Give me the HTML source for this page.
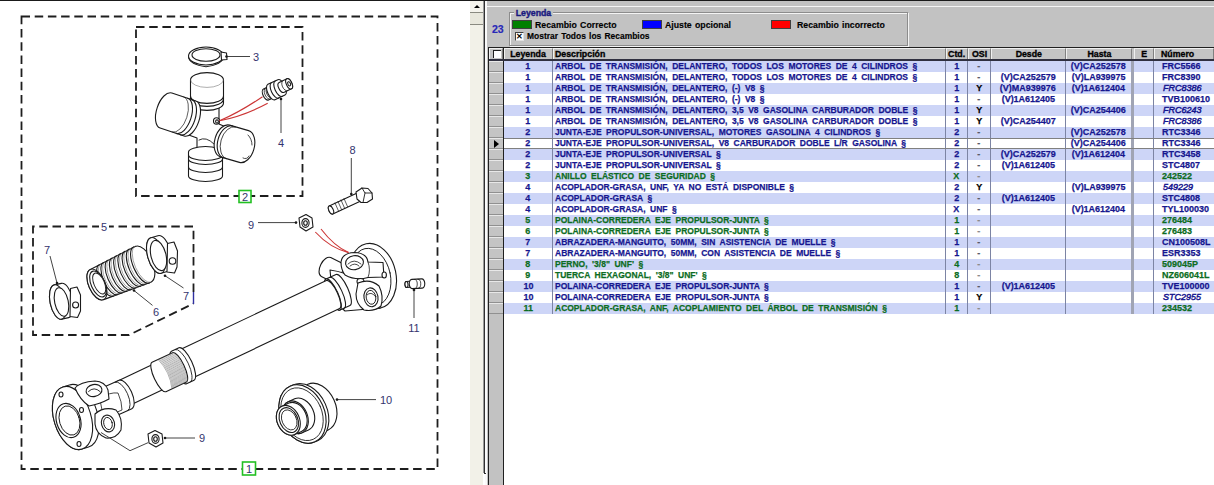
<!DOCTYPE html>
<html><head><meta charset="utf-8">
<style>
*{box-sizing:border-box}
html,body{margin:0;padding:0}
body{width:1214px;height:485px;overflow:hidden;position:relative;background:#fff;font-family:"Liberation Sans",sans-serif}
.a{position:absolute}
.row{position:absolute;left:504px;width:710px;height:11px}
.rb{background:#cdd5f7}
.rw{background:#fff}
.t{position:absolute;height:11px;line-height:11px;font-size:9.9px;font-weight:bold;white-space:nowrap;letter-spacing:0px;-webkit-text-stroke:0.25px currentColor}
.d{transform:scaleX(0.86);transform-origin:0 0;word-spacing:2.5px}
.sx{display:inline-block;transform:scaleX(0.91)}
.sxl{display:inline-block;transform:scaleX(0.91);transform-origin:0 0}
.c{text-align:center}
.b{color:#16168f}
.g{color:#0c6c22}
.k{color:#000}
.dash{color:#8a8a8a}
.dashb{color:#585868}
.it{font-style:italic;font-weight:normal;-webkit-text-stroke:0.5px currentColor}
.rhc{position:absolute;left:489px;width:14px;height:11px;border-top:1px solid #e8e8e8;border-bottom:1px solid #909090;background:#c4c4c4}
.vl{position:absolute;top:61px;height:253px;width:1px;background:#7c84a4}
.hd{position:absolute;top:48px;height:11px;background:#c4c4c4;border-left:1px solid #f0f0f0;border-top:1px solid #f0f0f0;border-right:1px solid #808080;font-size:9.9px;font-weight:bold;line-height:10px;color:#000;white-space:nowrap;-webkit-text-stroke:0.35px #000}
.hs{display:inline-block;transform:scaleX(0.89)}
.hsl{display:inline-block;transform:scaleX(0.89);transform-origin:0 0}
.lg{position:absolute;font-size:9.9px;font-weight:bold;color:#000;white-space:nowrap;line-height:10px;transform:scaleX(0.885);transform-origin:0 0;word-spacing:1px;-webkit-text-stroke:0.15px currentColor}
</style></head><body>
<svg class="a" style="left:0;top:0" width="470" height="485" viewBox="0 0 470 485">
<g fill="none" stroke="#1e1e1e" stroke-width="1.8" stroke-dasharray="8.5 4.7">
<path d="M21.5 16.5 H437.5 V469 H21.5 Z"/>
<path d="M136 27 H302.5 V196 H136 Z"/>
<path d="M193.5 292 V226.5 H33 V335 H129 L193.5 303.5"/>
</g>
<path d="M193.5 292 V304" stroke="#3030a0" stroke-width="1.4"/>
<g stroke="#1a1a1a" stroke-width="1.1" stroke-linejoin="round" stroke-linecap="round" fill="#fff">
<ellipse cx="206" cy="56" rx="17.5" ry="9" transform="rotate(0 206 56)" fill="#fff" />
<path d="M188.6 57.5 Q190 64.5 206 66.8 Q222 64.5 223.4 57.5" fill="none" />
<ellipse cx="206" cy="55" rx="14" ry="6.2" transform="rotate(0 206 55)" fill="none" />
<path d="M221 52 L226.5 53 L227 59.5 L221.5 60 Z" fill="#fff" />
<path d="M197 104 V124 L188 122 L186 134 L197 138 V154 H215 V150 L226 154 L228 128 L219 124 V104 Z" fill="#fff" />
<path d="M199 140 Q206 136 214 144 M200 150 Q205 147 211 150" fill="none" stroke-width="0.9"/>
<path d="M223.50,103.00 L223.50,80.00 A7.42,16.50 -90.0 0 0 207.00,72.58 A7.42,16.50 -90.0 0 0 190.50,80.00 L190.50,103.00 A7.42,16.50 -90.0 0 0 207.00,110.42 A7.42,16.50 -90.0 0 0 223.50,103.00 Z" fill="#fff" />
<path d="M223.50,99.00 A7.42,16.50 -90.0 0 1 207.00,106.42 A7.42,16.50 -90.0 0 1 190.50,99.00" fill="none" />
<path d="M223.50,96.00 A7.42,16.50 -90.0 0 1 207.00,103.42 A7.42,16.50 -90.0 0 1 190.50,96.00" fill="none" />
<path d="M223.50,80.00 A7.42,16.50 -90.0 0 1 207.00,87.42 A7.42,16.50 -90.0 0 1 190.50,80.00" fill="none" stroke-width="0.6" stroke="#777"/>
<path d="M195.85,100.95 L171.85,92.95 A9.25,18.50 -161.6 0 0 157.22,107.57 A9.25,18.50 -161.6 0 0 160.15,128.05 L184.15,136.05 A9.25,18.50 -161.6 0 0 198.78,121.43 A9.25,18.50 -161.6 0 0 195.85,100.95 Z" fill="#fff" />
<path d="M191.72,99.61 A9.25,18.50 198.0 0 1 194.80,120.06 A9.25,18.50 198.0 0 1 180.28,134.79" fill="none" />
<path d="M187.72,98.21 A9.25,18.50 198.0 0 1 190.80,118.66 A9.25,18.50 198.0 0 1 176.28,133.39" fill="none" />
<path d="M183.72,96.91 A9.25,18.50 198.0 0 1 186.80,117.36 A9.25,18.50 198.0 0 1 172.28,132.09" fill="none" stroke-width="0.7"/>
<ellipse cx="216.5" cy="121" rx="3" ry="3.2" transform="rotate(0 216.5 121)" fill="#fff" />
<ellipse cx="217" cy="121.5" rx="1.4" ry="1.6" transform="rotate(0 217 121.5)" fill="#fff" />
<path d="M188.50,152.00 L188.50,176.00 A5.44,17.00 90.0 0 0 205.50,181.44 A5.44,17.00 90.0 0 0 222.50,176.00 L222.50,152.00 A5.44,17.00 90.0 0 0 205.50,146.56 A5.44,17.00 90.0 0 0 188.50,152.00 Z" fill="#fff" />
<path d="M188.50,155.00 A5.44,17.00 90.0 0 0 205.50,160.44 A5.44,17.00 90.0 0 0 222.50,155.00" fill="none" />
<path d="M188.50,159.00 A5.44,17.00 90.0 0 0 205.50,164.44 A5.44,17.00 90.0 0 0 222.50,159.00" fill="none" />
<path d="M188.50,167.00 A5.44,17.00 90.0 0 0 205.50,172.44 A5.44,17.00 90.0 0 0 222.50,167.00" fill="none" />
<path d="M220.41,156.85 L239.41,162.35 A10.23,16.50 16.1 0 0 253.83,149.34 A10.23,16.50 16.1 0 0 248.59,130.65 L229.59,125.15 A10.23,16.50 16.1 0 0 215.17,138.16 A10.23,16.50 16.1 0 0 220.41,156.85 Z" fill="#fff" />
<path d="M223.45,157.76 A10.23,16.50 16.0 0 1 218.17,139.08 A10.23,16.50 16.0 0 1 232.55,126.04" fill="none" />
<path d="M226.45,158.66 A10.23,16.50 16.0 0 1 221.17,139.98 A10.23,16.50 16.0 0 1 235.55,126.94" fill="none" stroke-width="0.8"/>
<path d="M248 135 Q252 139 252 145 M243 158 Q247 160 249 156" fill="none" stroke-width="0.8"/>
<path d="M268.51,99.95 L273.96,97.44 A3.00,6.00 -24.7 0 0 274.17,90.74 A3.00,6.00 -24.7 0 0 268.94,86.54 L263.49,89.05 A3.00,6.00 -24.7 0 0 263.27,95.75 A3.00,6.00 -24.7 0 0 268.51,99.95 Z" fill="#fff" />
<path d="M270.32,99.12 A3.00,6.00 -24.7 0 1 265.09,94.92 A3.00,6.00 -24.7 0 1 265.31,88.21" fill="none" stroke-width="0.8"/>
<path d="M272.14,98.28 A3.00,6.00 -24.7 0 1 266.91,94.08 A3.00,6.00 -24.7 0 1 267.12,87.38" fill="none" stroke-width="0.8"/>
<path d="M275.00,99.71 L284.99,95.12 A3.83,8.50 -24.7 0 0 284.91,85.79 A3.83,8.50 -24.7 0 0 277.88,79.67 L267.89,84.27 A3.83,8.50 -24.7 0 0 267.97,93.59 A3.83,8.50 -24.7 0 0 275.00,99.71 Z" fill="#fff" />
<path d="M278.63,98.04 A3.83,8.50 -24.7 0 1 271.60,91.92 A3.83,8.50 -24.7 0 1 271.53,82.60" fill="none" />
<path d="M282.26,96.37 A3.83,8.50 -24.7 0 1 275.24,90.25 A3.83,8.50 -24.7 0 1 275.16,80.93" fill="none" />
<path d="M283.74,92.39 L291.45,88.84 A2.75,5.50 -24.7 0 0 291.65,82.69 A2.75,5.50 -24.7 0 0 286.85,78.84 L279.14,82.40 A2.75,5.50 -24.7 0 0 278.94,88.54 A2.75,5.50 -24.7 0 0 283.74,92.39 Z" fill="#fff" />
<ellipse cx="289.15" cy="83.84" rx="2.75" ry="5.50" transform="rotate(-24.7 289.15 83.84)" fill="#fff" />
<path d="M287.37,90.72 A2.75,5.50 -24.7 0 1 282.57,86.87 A2.75,5.50 -24.7 0 1 282.77,80.73" fill="none" stroke-width="0.8"/>
<ellipse cx="289.15" cy="83.84" rx="1.3" ry="2.2" transform="rotate(-24.7 289.15 83.84)" fill="#fff" />
<path d="M357.19,193.10 L329.19,206.10 A2.15,4.30 155.1 0 0 329.05,210.91 A2.15,4.30 155.1 0 0 332.81,213.90 L360.81,200.90 A2.15,4.30 155.1 0 0 360.95,196.09 A2.15,4.30 155.1 0 0 357.19,193.10 Z" fill="#fff" />
<ellipse cx="331.00" cy="210.00" rx="2.15" ry="4.30" transform="rotate(155.1 331.00 210.00)" fill="#fff" />
<path d="M335 203 l3.5 8 M338 201.5 l3.5 8 M341 200 l3.5 8 M344 198.5 l3.5 8" fill="none" stroke-width="0.7"/>
<path d="M356 192 L362 188 L368 188.5 L372 193 L372.5 199 L367 202.5 L361 202.5 L357 199 Z" fill="#fff" />
<path d="M362 188 L365 193 L372 193 M365 193 L363 202.5" fill="none" stroke-width="0.9"/>
<path d="M299 218 L306 214.5 L312 218 L313 227 L306 231 L300 227 Z" fill="#fff" />
<ellipse cx="305.5" cy="223" rx="3.6" ry="4.4" transform="rotate(0 305.5 223)" fill="#fff" />
<ellipse cx="305.5" cy="223" rx="1.8" ry="2.3" transform="rotate(0 305.5 223)" fill="#fff" />
<path d="M148 434 L155 430.5 L162 434 L163 443 L156 447 L149 443 Z" fill="#fff" />
<ellipse cx="155.5" cy="439" rx="3.6" ry="4.4" transform="rotate(0 155.5 439)" fill="#fff" />
<ellipse cx="155.5" cy="439" rx="1.8" ry="2.3" transform="rotate(0 155.5 439)" fill="#fff" />
<path d="M412.77,281.01 L406.27,281.51 A1.50,3.00 175.6 0 0 405.00,284.62 A1.50,3.00 175.6 0 0 406.73,287.49 L413.23,286.99 A1.50,3.00 175.6 0 0 414.50,283.88 A1.50,3.00 175.6 0 0 412.77,281.01 Z" fill="#fff" />
<ellipse cx="406.50" cy="284.50" rx="1.50" ry="3.00" transform="rotate(175.6 406.50 284.50)" fill="#fff" />
<path d="M421.77,278.91 L411.77,279.41 A2.76,4.60 177.1 0 0 409.24,284.14 A2.76,4.60 177.1 0 0 412.23,288.59 L422.23,288.09 A2.76,4.60 177.1 0 0 424.76,283.36 A2.76,4.60 177.1 0 0 421.77,278.91 Z" fill="#fff" />
<path d="M414.50,279.40 A2.76,4.60 180.0 0 1 417.26,284.00 A2.76,4.60 180.0 0 1 414.50,288.60" fill="none" stroke-width="0.8"/>
<path d="M418.00,279.20 A2.76,4.60 180.0 0 1 420.76,283.80 A2.76,4.60 180.0 0 1 418.00,288.40" fill="none" stroke-width="0.8"/>
<path d="M103.63,299.61 L150.84,282.15 A9.75,19.50 -23.7 0 0 151.93,260.38 A9.75,19.50 -23.7 0 0 135.16,246.45 L90.37,269.39 A8.25,16.50 -23.7 0 0 89.45,287.82 A8.25,16.50 -23.7 0 0 103.63,299.61 Z" fill="#fff" />
<ellipse cx="97.00" cy="284.50" rx="8.25" ry="16.50" transform="rotate(-23.7 97.00 284.50)" fill="#fff" />
<path d="M113.16,296.13 A7.21,17.16 -23.8 0 1 99.65,283.34 A7.21,17.16 -23.8 0 1 99.32,264.73" fill="none" stroke-width="1.1"/>
<path d="M114.89,295.50 A7.26,17.28 -23.8 0 1 101.28,282.62 A7.26,17.28 -23.8 0 1 100.95,263.88" fill="none" stroke-width="0.6" stroke="#666"/>
<path d="M117.70,294.48 A7.34,17.48 -23.8 0 1 103.93,281.45 A7.34,17.48 -23.8 0 1 103.60,262.50" fill="none" stroke-width="1.1"/>
<path d="M119.43,293.85 A7.39,17.59 -23.8 0 1 105.57,280.73 A7.39,17.59 -23.8 0 1 105.23,261.65" fill="none" stroke-width="0.6" stroke="#666"/>
<path d="M122.24,292.83 A7.47,17.79 -23.8 0 1 108.22,279.57 A7.47,17.79 -23.8 0 1 107.88,260.27" fill="none" stroke-width="1.1"/>
<path d="M123.97,292.20 A7.52,17.91 -23.8 0 1 109.86,278.85 A7.52,17.91 -23.8 0 1 109.51,259.42" fill="none" stroke-width="0.6" stroke="#666"/>
<path d="M126.78,291.17 A7.60,18.11 -23.8 0 1 112.51,277.67 A7.60,18.11 -23.8 0 1 112.16,258.03" fill="none" stroke-width="1.1"/>
<path d="M128.50,290.54 A7.65,18.23 -23.8 0 1 114.15,276.95 A7.65,18.23 -23.8 0 1 113.80,257.18" fill="none" stroke-width="0.6" stroke="#666"/>
<path d="M131.31,289.51 A7.74,18.42 -23.8 0 1 116.80,275.78 A7.74,18.42 -23.8 0 1 116.45,255.81" fill="none" stroke-width="1.1"/>
<path d="M133.04,288.88 A7.79,18.54 -23.8 0 1 118.44,275.06 A7.79,18.54 -23.8 0 1 118.08,254.96" fill="none" stroke-width="0.6" stroke="#666"/>
<path d="M135.85,287.86 A7.87,18.73 -23.8 0 1 121.09,273.90 A7.87,18.73 -23.8 0 1 120.73,253.58" fill="none" stroke-width="1.1"/>
<path d="M137.58,287.23 A7.92,18.86 -23.8 0 1 122.72,273.18 A7.92,18.86 -23.8 0 1 122.36,252.73" fill="none" stroke-width="0.6" stroke="#666"/>
<path d="M140.39,286.20 A8.00,19.05 -23.8 0 1 125.38,272.00 A8.00,19.05 -23.8 0 1 125.01,251.34" fill="none" stroke-width="1.1"/>
<path d="M142.12,285.58 A8.05,19.17 -23.8 0 1 127.01,271.29 A8.05,19.17 -23.8 0 1 126.64,250.50" fill="none" stroke-width="0.6" stroke="#666"/>
<path d="M144.92,284.55 A8.13,19.36 -23.8 0 1 129.67,270.11 A8.13,19.36 -23.8 0 1 129.30,249.11" fill="none" stroke-width="1.1"/>
<path d="M146.65,283.92 A8.18,19.48 -23.8 0 1 131.30,269.39 A8.18,19.48 -23.8 0 1 130.93,248.26" fill="none" stroke-width="0.6" stroke="#666"/>
<path d="M149.46,282.90 A8.27,19.68 -23.8 0 1 133.96,268.23 A8.27,19.68 -23.8 0 1 133.58,246.88" fill="none" stroke-width="1.1"/>
<path d="M151.19,282.27 A8.32,19.80 -23.8 0 1 135.59,267.51 A8.32,19.80 -23.8 0 1 135.21,246.03" fill="none" stroke-width="0.6" stroke="#666"/>
<ellipse cx="98" cy="284" rx="6.8" ry="13.8" transform="rotate(-23.8 98 284)" fill="#fff" />
<ellipse cx="99.2" cy="283.5" rx="5.2" ry="11.2" transform="rotate(-23.8 99.2 283.5)" fill="#fff" stroke-width="0.9"/>
<path d="M61.67,319.11 L68.67,317.61 A7.88,17.50 -12.1 0 0 72.70,298.85 A7.88,17.50 -12.1 0 0 61.33,283.39 L54.33,284.89 A7.88,17.50 -12.1 0 0 50.30,303.65 A7.88,17.50 -12.1 0 0 61.67,319.11 Z" fill="#fff" />
<ellipse cx="58.00" cy="302.00" rx="7.88" ry="17.50" transform="rotate(-12.1 58.00 302.00)" fill="#fff" />
<ellipse cx="61.5" cy="302" rx="6.8" ry="14.5" transform="rotate(-12 61.5 302)" fill="#fff" />
<path d="M70.5 288.5 L77 287 L80.5 295 L80.5 311 L77.5 317.5 L70 316.5 Z" fill="#fff" />
<ellipse cx="75.6" cy="305" rx="3" ry="3" transform="rotate(0 75.6 305)" fill="#fff" />
<path d="M161.08,273.29 L168.08,271.29 A8.33,18.50 -15.9 0 0 171.00,251.21 A8.33,18.50 -15.9 0 0 157.92,235.71 L150.92,237.71 A8.33,18.50 -15.9 0 0 148.00,257.79 A8.33,18.50 -15.9 0 0 161.08,273.29 Z" fill="#fff" />
<ellipse cx="156.00" cy="255.50" rx="8.33" ry="18.50" transform="rotate(-15.9 156.00 255.50)" fill="#fff" />
<ellipse cx="158.5" cy="255.5" rx="7.5" ry="15.5" transform="rotate(-14 158.5 255.5)" fill="#fff" />
<path d="M167.5 243.5 L174 242 L177.5 251 L177 267 L174.5 273 L167 272 Z" fill="#fff" />
<ellipse cx="172.5" cy="261" rx="3.3" ry="3.3" transform="rotate(0 172.5 261)" fill="#fff" />
<path d="M316.30,435.22 L328.18,429.94 A17.50,25.00 -24.0 0 0 334.02,399.98 A17.50,25.00 -24.0 0 0 307.88,384.24 L296.00,389.52 A17.50,25.00 -24.0 0 0 290.16,419.48 A17.50,25.00 -24.0 0 0 316.30,435.22 Z" fill="#fff" />
<path d="M320.89,433.18 A17.50,25.00 -24.0 0 1 294.73,417.46 A17.50,25.00 -24.0 0 1 300.55,387.50" fill="none" stroke-width="0.8"/>
<path d="M292.83,384.92 L290.09,386.14 A21.96,30.50 156.0 0 0 282.44,422.93 A21.96,30.50 156.0 0 0 314.91,441.86 L317.65,440.64 A21.96,30.50 156.0 0 0 325.30,403.85 A21.96,30.50 156.0 0 0 292.83,384.92 Z" fill="#fff" />
<ellipse cx="302.50" cy="414.00" rx="21.96" ry="30.50" transform="rotate(156.0 302.50 414.00)" fill="#fff" />
<ellipse cx="302.04" cy="414.2" rx="19.8" ry="27.5" transform="rotate(-24 302.04 414.2)" fill="none" stroke-width="0.8"/>
<path d="M294.69,398.87 L288.29,401.71 A12.24,17.00 156.1 0 0 284.00,422.21 A12.24,17.00 156.1 0 0 302.09,432.79 L308.49,429.95 A12.24,17.00 156.1 0 0 312.78,409.45 A12.24,17.00 156.1 0 0 294.69,398.87 Z" fill="#fff" />
<ellipse cx="295.19" cy="417.25" rx="12.24" ry="17.00" transform="rotate(156.1 295.19 417.25)" fill="#fff" />
<path d="M288.89,403.09 L282.04,406.14 A11.16,15.50 156.0 0 0 278.14,424.84 A11.16,15.50 156.0 0 0 294.64,434.46 L301.49,431.41 A11.16,15.50 156.0 0 0 305.39,412.71 A11.16,15.50 156.0 0 0 288.89,403.09 Z" fill="#fff" />
<ellipse cx="288.34" cy="420.30" rx="11.16" ry="15.50" transform="rotate(156.0 288.34 420.30)" fill="#fff" />
<ellipse cx="288.8" cy="420.1" rx="9.0" ry="13" transform="rotate(-24 288.8 420.1)" fill="#fff" />
<ellipse cx="289.25" cy="419.9" rx="7.199999999999999" ry="10.5" transform="rotate(-24 289.25 419.9)" fill="none" stroke-width="0.8"/>
<ellipse cx="373" cy="276" rx="23" ry="33" transform="rotate(-12 373 276)" fill="#fff" />
<ellipse cx="371" cy="277" rx="19.5" ry="29" transform="rotate(-12 371 277)" fill="#fff" stroke-width="0.9"/>
<path d="M344.70,264.61 L330.70,257.61 A5.78,10.50 -153.4 0 0 320.83,264.42 A5.78,10.50 -153.4 0 0 321.30,276.39 L335.30,283.39 A5.78,10.50 -153.4 0 0 345.17,276.58 A5.78,10.50 -153.4 0 0 344.70,264.61 Z" fill="#fff" />
<path d="M340.70,262.61 A5.78,10.50 206.6 0 1 341.16,274.59 A5.78,10.50 206.6 0 1 331.30,281.39" fill="none" stroke-width="0.9"/>
<path d="M330 270 Q345 272 360 280 L378 290 L380 308 L345 311 L333 300 Z" fill="#fff" />
<path d="M341 262 Q342 253 354.5 252.5 Q367 253 368 262 L383 262.5 L384 277 L368 277.5 Q356 281 345 275 Q341 270 341 262 Z" fill="#fff" />
<ellipse cx="354.5" cy="262.7" rx="9" ry="7" transform="rotate(-8 354.5 262.7)" fill="#fff" />
<path d="M348 264 Q354 258 361 264 M350 266 Q355 262 359 266" fill="none" stroke-width="0.8"/>
<path d="M368 262 Q371 270 368 277.5" fill="none" stroke-width="0.8"/>
<ellipse cx="384.2" cy="275" rx="2.2" ry="3" transform="rotate(0 384.2 275)" fill="#fff" />
<ellipse cx="360.5" cy="281.5" rx="3.5" ry="3" transform="rotate(0 360.5 281.5)" fill="#fff" />
<path d="M358 283 Q370 278 379 286 Q384 296 381 306 Q374 312 364 310 Q356 304 356 294 Z" fill="#fff" />
<ellipse cx="371" cy="297.3" rx="7" ry="9.5" transform="rotate(-10 371 297.3)" fill="#fff" />
<ellipse cx="371" cy="297.3" rx="4.8" ry="7" transform="rotate(-10 371 297.3)" fill="#fff" stroke-width="0.9"/>
<path d="M367 295 Q371 291 375 296" fill="none" stroke-width="0.8"/>
<path d="M336.02,274.50 L326.02,279.00 A5.10,17.00 155.8 0 0 328.35,296.59 A5.10,17.00 155.8 0 0 339.98,310.00 L349.98,305.50 A5.10,17.00 155.8 0 0 347.65,287.91 A5.10,17.00 155.8 0 0 336.02,274.50 Z" fill="#fff" />
<ellipse cx="333.00" cy="294.50" rx="5.10" ry="17.00" transform="rotate(155.8 333.00 294.50)" fill="#fff" />
<path d="M329.76,277.42 A5.10,17.00 154.8 0 1 341.61,290.63 A5.10,17.00 154.8 0 1 344.24,308.18" fill="none" />
<path d="M326.38,280.49 L180.38,349.49 A4.65,15.50 154.7 0 0 182.80,365.49 A4.65,15.50 154.7 0 0 193.62,377.51 L339.62,308.51 A4.65,15.50 154.7 0 0 337.20,292.51 A4.65,15.50 154.7 0 0 326.38,280.49 Z" fill="#fff" />
<path d="M186.53,383.63 L194.03,380.13 A5.70,17.80 -25.0 0 0 191.66,361.59 A5.70,17.80 -25.0 0 0 178.97,347.87 L171.47,351.37 A5.70,17.80 -25.0 0 0 173.84,369.91 A5.70,17.80 -25.0 0 0 186.53,383.63 Z" fill="#fff" />
<path d="M190.58,381.71 A5.70,17.80 -25.2 0 0 188.15,363.17 A5.70,17.80 -25.2 0 0 175.42,349.49" fill="none" stroke-width="0.9"/>
<path d="M156.21,362.81 L116.21,381.81 A4.05,13.50 154.6 0 0 118.34,395.74 A4.05,13.50 154.6 0 0 127.79,406.19 L167.79,387.19 A4.05,13.50 154.6 0 0 165.66,373.26 A4.05,13.50 154.6 0 0 156.21,362.81 Z" fill="#fff" />
<path d="M165.93,391.64 L186.43,381.94 A4.86,16.20 -25.3 0 0 183.89,365.22 A4.86,16.20 -25.3 0 0 172.57,352.66 L152.07,362.36 A4.86,16.20 -25.3 0 0 154.61,379.08 A4.86,16.20 -25.3 0 0 165.93,391.64 Z" fill="#fff" />
<g fill="none" stroke-width="0.5" stroke="#666">
<path d="M158.4 359.8 Q170.2 372.1 171.9 388.4"/>
<path d="M159.4 359.3 Q171.2 371.6 172.9 387.9"/>
<path d="M160.5 358.8 Q172.2 371.1 173.9 387.4"/>
<path d="M161.5 358.3 Q173.2 370.6 175.0 386.9"/>
<path d="M162.5 357.9 Q174.2 370.1 176.0 386.4"/>
<path d="M163.5 357.4 Q175.3 369.7 177.0 386.0"/>
<path d="M164.6 356.9 Q176.3 369.2 178.0 385.5"/>
<path d="M165.6 356.4 Q177.3 368.7 179.1 385.0"/>
<path d="M166.6 355.9 Q178.3 368.2 180.1 384.5"/>
<path d="M167.6 355.4 Q179.4 367.7 181.1 384.0"/>
<path d="M168.7 354.9 Q180.4 367.2 182.1 383.5"/>
<path d="M169.7 354.5 Q181.4 366.8 183.2 383.1"/>
<path d="M170.7 354.0 Q182.4 366.3 184.2 382.6"/>
<path d="M171.7 353.5 Q183.5 365.8 185.2 382.1"/>
<path d="M172.8 353.0 Q184.5 365.3 186.2 381.6"/>
<path d="M173.8 352.5 Q185.5 364.8 187.3 381.1"/>
</g>
<path d="M69.44,384.94 L62.94,386.94 A18.52,32.50 162.9 0 0 54.79,423.45 A18.52,32.50 162.9 0 0 82.06,449.06 L88.56,447.06 A18.52,32.50 162.9 0 0 96.71,410.55 A18.52,32.50 162.9 0 0 69.44,384.94 Z" fill="#fff" />
<ellipse cx="72.50" cy="418.00" rx="18.52" ry="32.50" transform="rotate(162.9 72.50 418.00)" fill="#fff" />
<ellipse cx="68.5" cy="420.5" rx="12" ry="17.5" transform="rotate(-17 68.5 420.5)" fill="#fff" />
<ellipse cx="69.5" cy="420.5" rx="10" ry="15" transform="rotate(-17 69.5 420.5)" fill="#fff" stroke-width="0.9"/>
<ellipse cx="61" cy="394.5" rx="2" ry="2.5" transform="rotate(0 61 394.5)" fill="#fff" />
<ellipse cx="81.5" cy="410" rx="2" ry="2.5" transform="rotate(0 81.5 410)" fill="#fff" />
<ellipse cx="79" cy="444" rx="2" ry="2.5" transform="rotate(0 79 444)" fill="#fff" />
<path d="M117.34,415.14 L131.84,408.64 A6.51,15.50 -24.1 0 0 131.44,391.84 A6.51,15.50 -24.1 0 0 119.16,380.36 L104.66,386.86 A6.51,15.50 -24.1 0 0 105.06,403.66 A6.51,15.50 -24.1 0 0 117.34,415.14 Z" fill="#fff" />
<path d="M127.80,410.46 A6.51,15.50 -24.0 0 0 127.45,393.65 A6.51,15.50 -24.0 0 0 115.20,382.14" fill="none" stroke-width="0.9"/>
<path d="M100 398 Q110 392 118 393 Q122 402 122 410 Q112 414 104 418 Z" fill="#fff" stroke-width="0.8"/>
<path d="M75 388 Q80 382 95 381 Q105 381.5 108 390 L109 399 Q100 404 89 406 Q80 400 75 388 Z" fill="#fff" />
<ellipse cx="94" cy="390.5" rx="8" ry="6" transform="rotate(-10 94 390.5)" fill="#fff" />
<path d="M88.5 391.5 Q94 386 100 391.5" fill="none" stroke-width="0.9"/>
<path d="M95 414 Q104 406 116 410 Q123 418 121 430 Q116 439 106 438 Q96 434 95 424 Z" fill="#fff" />
<ellipse cx="108" cy="423.5" rx="6.5" ry="8.5" transform="rotate(-15 108 423.5)" fill="#fff" />
<ellipse cx="108" cy="423.5" rx="4.2" ry="6.2" transform="rotate(-15 108 423.5)" fill="#fff" stroke-width="0.9"/>
</g>
<g stroke="#444" stroke-width="1" fill="none">
<path d="M227 56.5 H250"/>
<path d="M281 99 V133"/>
<path d="M351.3 158 V194"/>
<path d="M258 222.6 H296"/>
<path d="M101 432.5 L130 450.7 L148 442.7"/>
<path d="M165 438 H195"/>
<path d="M337 399.6 H376"/>
<path d="M414 290 V318"/>
<path d="M50 256 L57 283"/>
<path d="M134 290.5 L152.5 305.4"/>
<path d="M165 275.7 L183.5 288"/>
</g>
<g fill="#1a1a1a">
<circle cx="226.5" cy="56.5" r="1.3"/>
<circle cx="281" cy="99" r="1.3"/>
<circle cx="351.3" cy="194" r="1.3"/>
<circle cx="296" cy="222.6" r="1.3"/>
<circle cx="165" cy="438" r="1.3"/>
<circle cx="337" cy="399.6" r="1.3"/>
<circle cx="414" cy="290" r="1.3"/>
<circle cx="57" cy="283" r="1.3"/>
<circle cx="134" cy="290.5" r="1.3"/>
<circle cx="165" cy="275.7" r="1.3"/>
</g>
<g stroke="#cc3535" stroke-width="1.1" fill="none">
<path d="M262.5 96.7 Q240 112 219.5 120.8"/>
<path d="M267.7 103.3 Q244 116 219.5 120.8"/>
<path d="M315.3 232 Q330 248 348.6 252.6"/>
<path d="M321 229 Q334 246 348.6 252.6"/>
</g>
<g font-family="Liberation Sans, sans-serif" font-size="11" fill="#34346e" text-anchor="middle">
<text x="256" y="61">3</text>
<text x="281" y="146.5">4</text>
<text x="352.6" y="154">8</text>
<text x="251" y="228.5">9</text>
<rect x="99" y="222.4" width="10" height="10" fill="#fff" stroke="none"/>
<text x="104" y="231.4">5</text>
<text x="47" y="253.7">7</text>
<text x="156" y="315.6">6</text>
<text x="186" y="299.5">7</text>
<text x="414" y="331.5">11</text>
<text x="386" y="404">10</text>
<text x="202" y="442">9</text>
</g>
<rect x="239" y="190.5" width="12" height="12" fill="#fff" stroke="#22c022" stroke-width="1.6"/>
<text x="245" y="200.5" font-family="Liberation Sans, sans-serif" font-size="11" fill="#34346e" text-anchor="middle">2</text>
<rect x="242.5" y="462" width="13" height="13" fill="#fff" stroke="#22c022" stroke-width="1.6"/>
<text x="249" y="472.5" font-family="Liberation Sans, sans-serif" font-size="11" fill="#34346e" text-anchor="middle">1</text>
</svg>
<!-- top line -->
<div class="a" style="left:0;top:0;width:1214px;height:1px;background:#1a1a1a"></div>
<!-- scrollbar -->
<div class="a" style="left:470px;top:1px;width:13px;height:484px;background:#f2f1e8"></div>
<div class="a" style="left:470px;top:1px;width:13px;height:12px;background:#f4f3ec;border-bottom:1px solid #8a8a80"></div>
<div class="a" style="left:474px;top:5px;width:0;height:0;border-left:3px solid transparent;border-right:3px solid transparent;border-bottom:3px solid #000"></div>
<div class="a" style="left:470px;top:13px;width:13px;height:12px;background:#e8e7dc;border-bottom:1px solid #8a8a80"></div>
<div class="a" style="left:483px;top:1px;width:1px;height:472px;background:#9a9a9a"></div>
<div class="a" style="left:484px;top:1px;width:1px;height:473px;background:#303030"></div>
<div class="a" style="left:485px;top:1px;width:2px;height:484px;background:#fafafa"></div>
<!-- right panel -->
<div class="a" style="left:487px;top:1px;width:727px;height:484px;background:#c2c2c2"></div>
<div class="a" style="left:487px;top:6px;width:727px;height:1px;background:#f4f4f4"></div>
<!-- group box -->
<div class="a" style="left:509px;top:12px;width:399px;height:34px;border:1px solid #8c8c8c;box-shadow:inset 1px 1px 0 #f4f4f4, 1px 1px 0 #f4f4f4"></div>
<div class="a lg" style="left:514px;top:8px;padding:0 2px;background:#c2c2c2;color:#1a1a80;-webkit-text-stroke:0.45px currentColor">Leyenda</div>
<div class="a" style="left:492px;top:24px;font-size:10.5px;font-weight:bold;color:#2828b8;line-height:10px;-webkit-text-stroke:0.2px currentColor">23</div>
<div class="a" style="left:512px;top:20px;width:20px;height:9px;background:#008000;border:1px solid #404040"></div>
<div class="a lg" style="left:535px;top:20px">Recambio Correcto</div>
<div class="a" style="left:642px;top:20px;width:20px;height:9px;background:#0000ff;border:1px solid #404040"></div>
<div class="a lg" style="left:665px;top:20px">Ajuste opcional</div>
<div class="a" style="left:771px;top:20px;width:20px;height:9px;background:#ff0000;border:1px solid #404040"></div>
<div class="a lg" style="left:797px;top:20px">Recambio incorrecto</div>
<div class="a" style="left:515px;top:32px;width:9px;height:9px;background:#fff;border-top:1px solid #404040;border-left:1px solid #404040;border-right:1px solid #e0e0e0;border-bottom:1px solid #e0e0e0;font-size:8px;line-height:7px;text-align:center;font-weight:bold">&#x2715;</div>
<div class="a lg" style="left:527px;top:31px;transform:scaleX(0.855)">Mostrar Todos los Recambios</div>
<!-- table -->
<div class="a" style="left:488px;top:47px;width:726px;height:1px;background:#202020"></div>
<div class="a" style="left:488px;top:47px;width:1px;height:438px;background:#202020"></div>
<div class="a" style="left:489px;top:48px;width:725px;height:437px;background:#c2c2c2"></div>
<div class="a" style="left:504px;top:60px;width:710px;height:425px;background:#fff"></div>
<div class="a" style="left:503px;top:48px;width:1px;height:437px;background:#202020"></div>
<div class="a" style="left:489px;top:59px;width:725px;height:2px;background:#303040"></div>
<div class="hd" style="left:489px;width:14px"><div class="a" style="left:3px;top:1px;width:8px;height:8px;background:#fff;border-top:1px solid #202020;border-left:1px solid #202020"></div></div>
<div class="hd" style="left:504px;width:49px;text-align:center"><span class="hs">Leyenda</span></div>
<div class="hd" style="left:553px;width:393px;padding-left:1px"><span class="hsl">Descripción</span></div>
<div class="hd" style="left:946px;width:22px;text-align:center"><span class="hs">Ctd.</span></div>
<div class="hd" style="left:968px;width:23px;text-align:center"><span class="hs">OSI</span></div>
<div class="hd" style="left:991px;width:75px;text-align:center"><span class="hs">Desde</span></div>
<div class="hd" style="left:1066px;width:66px;text-align:center"><span class="hs">Hasta</span></div>
<div class="hd" style="left:1134px;width:20px;text-align:center"><span class="hs">E</span></div>
<div class="hd" style="left:1154px;width:60px;padding-left:6px"><span class="hsl">Número</span></div>
<div class="row rb" style="top:61px"></div>
<div class="t c b" style="top:60px;left:504px;width:48px"><span class="sx">1</span></div>
<div class="t d b" style="top:60px;left:555px">ARBOL DE TRANSMISIÓN, DELANTERO, TODOS LOS MOTORES DE 4 CILINDROS §</div>
<div class="t c b" style="top:60px;left:946px;width:21px"><span class="sx">1</span></div>
<div class="t c dashb" style="top:60px;left:968px;width:22px"><span class="sx">-</span></div>
<div class="t c b" style="top:60px;left:1066px;width:65px"><span class="sx">(V)CA252578</span></div>
<div class="t b" style="top:60px;left:1162px"><span class="sxl">FRC5566</span></div>
<div class="rhc" style="top:61px"></div>
<div class="row rw" style="top:72px"></div>
<div class="t c b" style="top:71px;left:504px;width:48px"><span class="sx">1</span></div>
<div class="t d b" style="top:71px;left:555px">ARBOL DE TRANSMISIÓN, DELANTERO, TODOS LOS MOTORES DE 4 CILINDROS §</div>
<div class="t c b" style="top:71px;left:946px;width:21px"><span class="sx">1</span></div>
<div class="t c dashb" style="top:71px;left:968px;width:22px"><span class="sx">-</span></div>
<div class="t c b" style="top:71px;left:991px;width:74px"><span class="sx">(V)CA252579</span></div>
<div class="t c b" style="top:71px;left:1066px;width:65px"><span class="sx">(V)LA939975</span></div>
<div class="t b" style="top:71px;left:1162px"><span class="sxl">FRC8390</span></div>
<div class="rhc" style="top:72px"></div>
<div class="row rb" style="top:83px"></div>
<div class="t c b" style="top:82px;left:504px;width:48px"><span class="sx">1</span></div>
<div class="t d b" style="top:82px;left:555px">ARBOL DE TRANSMISIÓN, DELANTERO, (-) V8 §</div>
<div class="t c b" style="top:82px;left:946px;width:21px"><span class="sx">1</span></div>
<div class="t c k" style="top:82px;left:968px;width:22px"><span class="sx">Y</span></div>
<div class="t c b" style="top:82px;left:991px;width:74px"><span class="sx">(V)MA939976</span></div>
<div class="t c b" style="top:82px;left:1066px;width:65px"><span class="sx">(V)1A612404</span></div>
<div class="t b it" style="top:82px;left:1163px"><span class="sxl">FRC8386</span></div>
<div class="rhc" style="top:83px"></div>
<div class="row rw" style="top:94px"></div>
<div class="t c b" style="top:93px;left:504px;width:48px"><span class="sx">1</span></div>
<div class="t d b" style="top:93px;left:555px">ARBOL DE TRANSMISIÓN, DELANTERO, (-) V8 §</div>
<div class="t c b" style="top:93px;left:946px;width:21px"><span class="sx">1</span></div>
<div class="t c dashb" style="top:93px;left:968px;width:22px"><span class="sx">-</span></div>
<div class="t c b" style="top:93px;left:991px;width:74px"><span class="sx">(V)1A612405</span></div>
<div class="t b" style="top:93px;left:1162px"><span class="sxl">TVB100610</span></div>
<div class="rhc" style="top:94px"></div>
<div class="row rb" style="top:105px"></div>
<div class="t c b" style="top:104px;left:504px;width:48px"><span class="sx">1</span></div>
<div class="t d b" style="top:104px;left:555px">ARBOL DE TRANSMISIÓN, DELANTERO, 3,5 V8 GASOLINA CARBURADOR DOBLE §</div>
<div class="t c b" style="top:104px;left:946px;width:21px"><span class="sx">1</span></div>
<div class="t c k" style="top:104px;left:968px;width:22px"><span class="sx">Y</span></div>
<div class="t c b" style="top:104px;left:1066px;width:65px"><span class="sx">(V)CA254406</span></div>
<div class="t b it" style="top:104px;left:1163px"><span class="sxl">FRC6243</span></div>
<div class="rhc" style="top:105px"></div>
<div class="row rw" style="top:116px"></div>
<div class="t c b" style="top:115px;left:504px;width:48px"><span class="sx">1</span></div>
<div class="t d b" style="top:115px;left:555px">ARBOL DE TRANSMISIÓN, DELANTERO, 3,5 V8 GASOLINA CARBURADOR DOBLE §</div>
<div class="t c b" style="top:115px;left:946px;width:21px"><span class="sx">1</span></div>
<div class="t c k" style="top:115px;left:968px;width:22px"><span class="sx">Y</span></div>
<div class="t c b" style="top:115px;left:991px;width:74px"><span class="sx">(V)CA254407</span></div>
<div class="t b it" style="top:115px;left:1163px"><span class="sxl">FRC8386</span></div>
<div class="rhc" style="top:116px"></div>
<div class="row rb" style="top:127px"></div>
<div class="t c b" style="top:126px;left:504px;width:48px"><span class="sx">2</span></div>
<div class="t d b" style="top:126px;left:555px">JUNTA-EJE PROPULSOR-UNIVERSAL, MOTORES GASOLINA 4 CILINDROS §</div>
<div class="t c b" style="top:126px;left:946px;width:21px"><span class="sx">2</span></div>
<div class="t c dashb" style="top:126px;left:968px;width:22px"><span class="sx">-</span></div>
<div class="t c b" style="top:126px;left:1066px;width:65px"><span class="sx">(V)CA252578</span></div>
<div class="t b" style="top:126px;left:1162px"><span class="sxl">RTC3346</span></div>
<div class="rhc" style="top:127px"></div>
<div class="row rw" style="top:138px"></div>
<div class="t c b" style="top:137px;left:504px;width:48px"><span class="sx">2</span></div>
<div class="t d b" style="top:137px;left:555px">JUNTA-EJE PROPULSOR-UNIVERSAL, V8 CARBURADOR DOBLE L/R GASOLINA §</div>
<div class="t c b" style="top:137px;left:946px;width:21px"><span class="sx">2</span></div>
<div class="t c dashb" style="top:137px;left:968px;width:22px"><span class="sx">-</span></div>
<div class="t c b" style="top:137px;left:1066px;width:65px"><span class="sx">(V)CA254406</span></div>
<div class="t b" style="top:137px;left:1162px"><span class="sxl">RTC3346</span></div>
<div class="rhc" style="top:138px"></div>
<div class="row rb" style="top:149px"></div>
<div class="t c b" style="top:148px;left:504px;width:48px"><span class="sx">2</span></div>
<div class="t d b" style="top:148px;left:555px">JUNTA-EJE PROPULSOR-UNIVERSAL §</div>
<div class="t c b" style="top:148px;left:946px;width:21px"><span class="sx">2</span></div>
<div class="t c dashb" style="top:148px;left:968px;width:22px"><span class="sx">-</span></div>
<div class="t c b" style="top:148px;left:991px;width:74px"><span class="sx">(V)CA252579</span></div>
<div class="t c b" style="top:148px;left:1066px;width:65px"><span class="sx">(V)1A612404</span></div>
<div class="t b" style="top:148px;left:1162px"><span class="sxl">RTC3458</span></div>
<div class="rhc" style="top:149px"></div>
<div class="row rw" style="top:160px"></div>
<div class="t c b" style="top:159px;left:504px;width:48px"><span class="sx">2</span></div>
<div class="t d b" style="top:159px;left:555px">JUNTA-EJE PROPULSOR-UNIVERSAL §</div>
<div class="t c b" style="top:159px;left:946px;width:21px"><span class="sx">2</span></div>
<div class="t c dashb" style="top:159px;left:968px;width:22px"><span class="sx">-</span></div>
<div class="t c b" style="top:159px;left:991px;width:74px"><span class="sx">(V)1A612405</span></div>
<div class="t b" style="top:159px;left:1162px"><span class="sxl">STC4807</span></div>
<div class="rhc" style="top:160px"></div>
<div class="row rb" style="top:171px"></div>
<div class="t c g" style="top:170px;left:504px;width:48px"><span class="sx">3</span></div>
<div class="t d g" style="top:170px;left:555px">ANILLO ELÁSTICO DE SEGURIDAD §</div>
<div class="t c g" style="top:170px;left:946px;width:21px"><span class="sx">X</span></div>
<div class="t c dash" style="top:170px;left:968px;width:22px"><span class="sx">-</span></div>
<div class="t g" style="top:170px;left:1162px"><span class="sxl">242522</span></div>
<div class="rhc" style="top:171px"></div>
<div class="row rw" style="top:182px"></div>
<div class="t c b" style="top:181px;left:504px;width:48px"><span class="sx">4</span></div>
<div class="t d b" style="top:181px;left:555px">ACOPLADOR-GRASA, UNF, YA NO ESTÁ DISPONIBLE §</div>
<div class="t c b" style="top:181px;left:946px;width:21px"><span class="sx">2</span></div>
<div class="t c k" style="top:181px;left:968px;width:22px"><span class="sx">Y</span></div>
<div class="t c b" style="top:181px;left:1066px;width:65px"><span class="sx">(V)LA939975</span></div>
<div class="t b it" style="top:181px;left:1163px"><span class="sxl">549229</span></div>
<div class="rhc" style="top:182px"></div>
<div class="row rb" style="top:193px"></div>
<div class="t c b" style="top:192px;left:504px;width:48px"><span class="sx">4</span></div>
<div class="t d b" style="top:192px;left:555px">ACOPLADOR-GRASA §</div>
<div class="t c b" style="top:192px;left:946px;width:21px"><span class="sx">2</span></div>
<div class="t c dashb" style="top:192px;left:968px;width:22px"><span class="sx">-</span></div>
<div class="t c b" style="top:192px;left:991px;width:74px"><span class="sx">(V)1A612405</span></div>
<div class="t b" style="top:192px;left:1162px"><span class="sxl">STC4808</span></div>
<div class="rhc" style="top:193px"></div>
<div class="row rw" style="top:204px"></div>
<div class="t c b" style="top:203px;left:504px;width:48px"><span class="sx">4</span></div>
<div class="t d b" style="top:203px;left:555px">ACOPLADOR-GRASA, UNF §</div>
<div class="t c b" style="top:203px;left:946px;width:21px"><span class="sx">X</span></div>
<div class="t c dashb" style="top:203px;left:968px;width:22px"><span class="sx">-</span></div>
<div class="t c b" style="top:203px;left:1066px;width:65px"><span class="sx">(V)1A612404</span></div>
<div class="t b" style="top:203px;left:1162px"><span class="sxl">TYL100030</span></div>
<div class="rhc" style="top:204px"></div>
<div class="row rb" style="top:215px"></div>
<div class="t c g" style="top:214px;left:504px;width:48px"><span class="sx">5</span></div>
<div class="t d g" style="top:214px;left:555px">POLAINA-CORREDERA EJE PROPULSOR-JUNTA §</div>
<div class="t c g" style="top:214px;left:946px;width:21px"><span class="sx">1</span></div>
<div class="t c dash" style="top:214px;left:968px;width:22px"><span class="sx">-</span></div>
<div class="t g" style="top:214px;left:1162px"><span class="sxl">276484</span></div>
<div class="rhc" style="top:215px"></div>
<div class="row rw" style="top:226px"></div>
<div class="t c g" style="top:225px;left:504px;width:48px"><span class="sx">6</span></div>
<div class="t d g" style="top:225px;left:555px">POLAINA-CORREDERA EJE PROPULSOR-JUNTA §</div>
<div class="t c g" style="top:225px;left:946px;width:21px"><span class="sx">1</span></div>
<div class="t c dash" style="top:225px;left:968px;width:22px"><span class="sx">-</span></div>
<div class="t g" style="top:225px;left:1162px"><span class="sxl">276483</span></div>
<div class="rhc" style="top:226px"></div>
<div class="row rb" style="top:237px"></div>
<div class="t c b" style="top:236px;left:504px;width:48px"><span class="sx">7</span></div>
<div class="t d b" style="top:236px;left:555px">ABRAZADERA-MANGUITO, 50MM, SIN ASISTENCIA DE MUELLE §</div>
<div class="t c b" style="top:236px;left:946px;width:21px"><span class="sx">1</span></div>
<div class="t c dashb" style="top:236px;left:968px;width:22px"><span class="sx">-</span></div>
<div class="t b" style="top:236px;left:1162px"><span class="sxl">CN100508L</span></div>
<div class="rhc" style="top:237px"></div>
<div class="row rw" style="top:248px"></div>
<div class="t c b" style="top:247px;left:504px;width:48px"><span class="sx">7</span></div>
<div class="t d b" style="top:247px;left:555px">ABRAZADERA-MANGUITO, 50MM, CON ASISTENCIA DE MUELLE §</div>
<div class="t c b" style="top:247px;left:946px;width:21px"><span class="sx">1</span></div>
<div class="t c dashb" style="top:247px;left:968px;width:22px"><span class="sx">-</span></div>
<div class="t b" style="top:247px;left:1162px"><span class="sxl">ESR3353</span></div>
<div class="rhc" style="top:248px"></div>
<div class="row rb" style="top:259px"></div>
<div class="t c g" style="top:258px;left:504px;width:48px"><span class="sx">8</span></div>
<div class="t d g" style="top:258px;left:555px">PERNO, &#x27;3/8&quot; UNF&#x27; §</div>
<div class="t c g" style="top:258px;left:946px;width:21px"><span class="sx">4</span></div>
<div class="t c dash" style="top:258px;left:968px;width:22px"><span class="sx">-</span></div>
<div class="t g" style="top:258px;left:1162px"><span class="sxl">509045P</span></div>
<div class="rhc" style="top:259px"></div>
<div class="row rw" style="top:270px"></div>
<div class="t c g" style="top:269px;left:504px;width:48px"><span class="sx">9</span></div>
<div class="t d g" style="top:269px;left:555px">TUERCA HEXAGONAL, &#x27;3/8&quot; UNF&#x27; §</div>
<div class="t c g" style="top:269px;left:946px;width:21px"><span class="sx">8</span></div>
<div class="t c dash" style="top:269px;left:968px;width:22px"><span class="sx">-</span></div>
<div class="t g" style="top:269px;left:1162px"><span class="sxl">NZ606041L</span></div>
<div class="rhc" style="top:270px"></div>
<div class="row rb" style="top:281px"></div>
<div class="t c b" style="top:280px;left:504px;width:48px"><span class="sx">10</span></div>
<div class="t d b" style="top:280px;left:555px">POLAINA-CORREDERA EJE PROPULSOR-JUNTA §</div>
<div class="t c b" style="top:280px;left:946px;width:21px"><span class="sx">1</span></div>
<div class="t c dashb" style="top:280px;left:968px;width:22px"><span class="sx">-</span></div>
<div class="t c b" style="top:280px;left:991px;width:74px"><span class="sx">(V)1A612405</span></div>
<div class="t b" style="top:280px;left:1162px"><span class="sxl">TVE100000</span></div>
<div class="rhc" style="top:281px"></div>
<div class="row rw" style="top:292px"></div>
<div class="t c b" style="top:291px;left:504px;width:48px"><span class="sx">10</span></div>
<div class="t d b" style="top:291px;left:555px">POLAINA-CORREDERA EJE PROPULSOR-JUNTA §</div>
<div class="t c b" style="top:291px;left:946px;width:21px"><span class="sx">1</span></div>
<div class="t c k" style="top:291px;left:968px;width:22px"><span class="sx">Y</span></div>
<div class="t b it" style="top:291px;left:1163px"><span class="sxl">STC2955</span></div>
<div class="rhc" style="top:292px"></div>
<div class="row rb" style="top:303px"></div>
<div class="t c g" style="top:302px;left:504px;width:48px"><span class="sx">11</span></div>
<div class="t d g" style="top:302px;left:555px">ACOPLADOR-GRASA, ANF, ACOPLAMIENTO DEL ÁRBOL DE TRANSMISIÓN §</div>
<div class="t c g" style="top:302px;left:946px;width:21px"><span class="sx">1</span></div>
<div class="t c dash" style="top:302px;left:968px;width:22px"><span class="sx">-</span></div>
<div class="t g" style="top:302px;left:1162px"><span class="sxl">234532</span></div>
<div class="rhc" style="top:303px"></div>
<div class="vl" style="left:552px"></div>
<div class="vl" style="left:945px"></div>
<div class="vl" style="left:967px"></div>
<div class="vl" style="left:990px"></div>
<div class="vl" style="left:1065px"></div>
<div class="vl" style="left:1131px;width:3px;background:#a0a4b4"></div>
<div class="vl" style="left:1153px"></div>
<!-- row 8 focus -->
<div class="a" style="left:504px;top:138px;width:710px;height:1px;background:#808080"></div>
<div class="a" style="left:504px;top:148px;width:710px;height:1px;background:#808080"></div>
<div class="a" style="left:494px;top:140px;width:0;height:0;border-top:4px solid transparent;border-bottom:4px solid transparent;border-left:5px solid #000"></div>
<!-- bottom scrollbar foot -->
<div class="a" style="left:484px;top:473px;width:2px;height:1px;background:#303030"></div>
</body></html>
